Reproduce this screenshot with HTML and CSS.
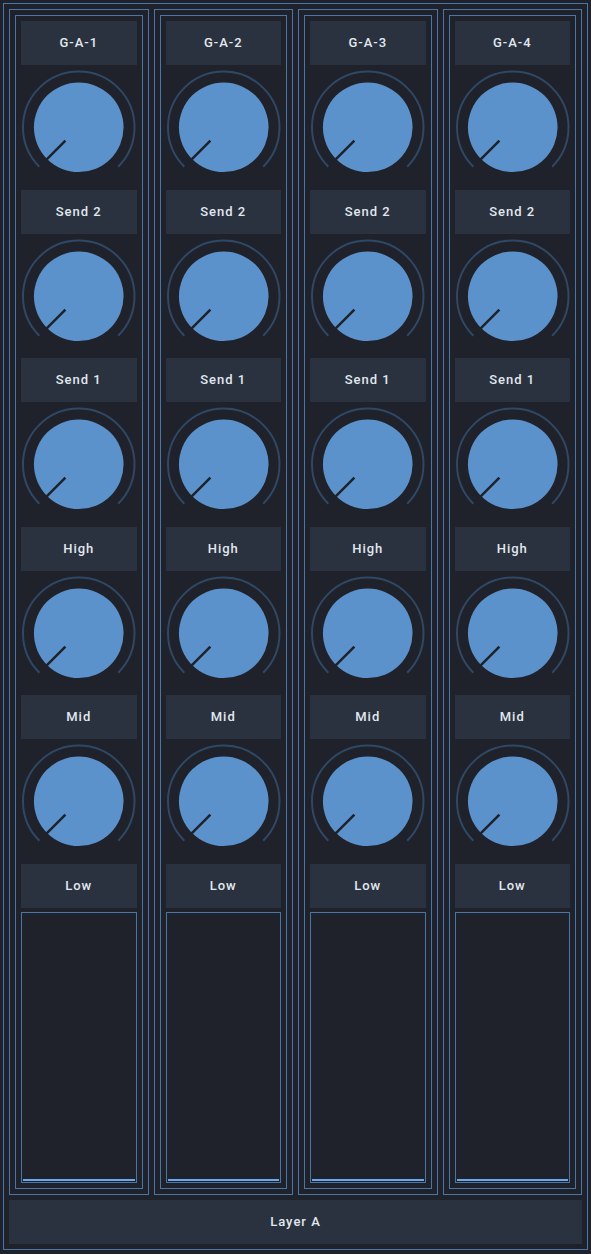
FILE: index.html
```html
<!DOCTYPE html>
<html>
<head>
  <title>Mixer - Layer A</title>
  <link rel="stylesheet" href="styles.css">
</head>
<body>
  <svg class="defs" width="0" height="0">
    <symbol id="knob" viewBox="0 0 116 125">
      <path class="knob-track" d="M 18.4 102.1 A 56 56 0 1 1 97.6 102.1"/>
      <circle class="knob-body" cx="58" cy="62.5" r="45"/>
      <line class="knob-pointer" x1="44.6" y1="75.9" x2="25.8" y2="94.7"/>
    </symbol>
  </svg>

  <div class="mixer">
    <div class="strips">
      <div class="strip">
        <div class="strip-inner">
          <div class="label">G-A-1</div>
          <svg class="knob"><use href="#knob"/></svg>
          <div class="label">Send 2</div>
          <svg class="knob"><use href="#knob"/></svg>
          <div class="label">Send 1</div>
          <svg class="knob"><use href="#knob"/></svg>
          <div class="label">High</div>
          <svg class="knob"><use href="#knob"/></svg>
          <div class="label">Mid</div>
          <svg class="knob"><use href="#knob"/></svg>
          <div class="label">Low</div>
          <div class="fader"><div class="fader-level"></div></div>
        </div>
      </div>
      <div class="strip">
        <div class="strip-inner">
          <div class="label">G-A-2</div>
          <svg class="knob"><use href="#knob"/></svg>
          <div class="label">Send 2</div>
          <svg class="knob"><use href="#knob"/></svg>
          <div class="label">Send 1</div>
          <svg class="knob"><use href="#knob"/></svg>
          <div class="label">High</div>
          <svg class="knob"><use href="#knob"/></svg>
          <div class="label">Mid</div>
          <svg class="knob"><use href="#knob"/></svg>
          <div class="label">Low</div>
          <div class="fader"><div class="fader-level"></div></div>
        </div>
      </div>
      <div class="strip">
        <div class="strip-inner">
          <div class="label">G-A-3</div>
          <svg class="knob"><use href="#knob"/></svg>
          <div class="label">Send 2</div>
          <svg class="knob"><use href="#knob"/></svg>
          <div class="label">Send 1</div>
          <svg class="knob"><use href="#knob"/></svg>
          <div class="label">High</div>
          <svg class="knob"><use href="#knob"/></svg>
          <div class="label">Mid</div>
          <svg class="knob"><use href="#knob"/></svg>
          <div class="label">Low</div>
          <div class="fader"><div class="fader-level"></div></div>
        </div>
      </div>
      <div class="strip">
        <div class="strip-inner">
          <div class="label">G-A-4</div>
          <svg class="knob"><use href="#knob"/></svg>
          <div class="label">Send 2</div>
          <svg class="knob"><use href="#knob"/></svg>
          <div class="label">Send 1</div>
          <svg class="knob"><use href="#knob"/></svg>
          <div class="label">High</div>
          <svg class="knob"><use href="#knob"/></svg>
          <div class="label">Mid</div>
          <svg class="knob"><use href="#knob"/></svg>
          <div class="label">Low</div>
          <div class="fader"><div class="fader-level"></div></div>
        </div>
      </div>
    </div>

    <div class="label layer">Layer A</div>
  </div>
</body>
</html>
```

FILE: styles.css
```css
html, body {
  height: 100%;
}
body {
  margin: 0;
  padding: 3px;
  box-sizing: border-box;
  background-color: #1f222a;
  font-family: Roboto, "Liberation Sans", sans-serif;
  color: #e2e8f0;
}
.defs {
  position: absolute;
  width: 0;
  height: 0;
}
.mixer {
  height: calc(100vh - 7px);
  box-sizing: border-box;
  border: 1px solid #4a76a6;
  padding: 5px;
  display: flex;
  flex-direction: column;
  gap: 5px;
}
.strips {
  flex: 1;
  display: flex;
  gap: 5px;
  min-height: 0;
}
.strip {
  flex: 1;
  min-width: 0;
  border: 1px solid #4a76a6;
  padding: 5px;
  display: flex;
}
.strip-inner {
  flex: 1;
  min-width: 0;
  border: 1px solid #4a76a6;
  padding: 5px;
  display: flex;
  flex-direction: column;
}
.label {
  height: 44px;
  flex-shrink: 0;
  background-color: #29323e;
  display: flex;
  align-items: center;
  justify-content: center;
  padding-bottom: 1px;
  box-sizing: border-box;
  font-size: 13px;
  font-weight: 500;
  letter-spacing: 1px;
}
.knob {
  display: block;
  width: 100%;
  height: 124.6px;
  flex-shrink: 0;
}
.knob-track {
  fill: none;
  stroke: #2e4866;
  stroke-width: 2;
}
.knob-body {
  fill: #5b92cc;
}
.knob-pointer {
  stroke: #1f222a;
  stroke-width: 2.5;
}
.fader {
  flex: 1;
  margin-top: 4px;
  border: 1px solid #4a76a6;
  padding: 1px;
  display: flex;
  flex-direction: column;
  justify-content: flex-end;
}
.fader-level {
  height: 2px;
  background-color: #68aaf0;
}
.layer {
  flex-shrink: 0;
}
```
